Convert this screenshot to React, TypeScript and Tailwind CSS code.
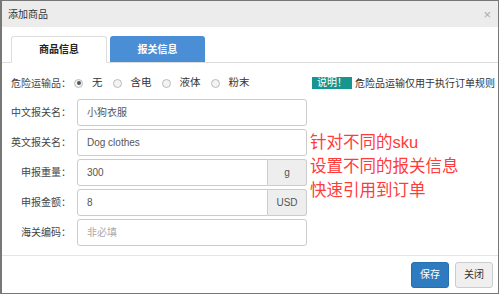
import React from "react";

const font = { fontFamily: '"Liberation Sans", "Noto Sans CJK SC", sans-serif' };

function Radio({ checked, label }: { checked?: boolean; label: string }) {
  return (
    <div className="flex items-center gap-[9px]">
      <span className="w-[9px] h-[9px] rounded-full border border-[#bbb] bg-[#f3f3f3] flex items-center justify-center">
        {checked && <span className="w-[4px] h-[4px] rounded-full bg-[#555]" />}
      </span>
      <span className="text-[10.5px] text-[#333]">{label}</span>
    </div>
  );
}

function Row({ label, children }: { label: string; children: React.ReactNode }) {
  return (
    <div className="flex items-center h-[27px]">
      <div className="w-[60px] text-right text-[10px] text-[#444] whitespace-nowrap">{label}</div>
      <div className="ml-[6px] w-[230px] h-full flex">{children}</div>
    </div>
  );
}

export default function App() {
  return (
    <div className="w-[500px] h-[295px] bg-white" style={font}>
      <div className="w-[499px] h-[294px] border border-[#777] border-l-2 flex flex-col relative">
        <div className="h-[26px] bg-[#ececec] flex items-center justify-between pl-[6px] pr-[7px] shrink-0">
          <span className="text-[10px] text-[#333]">添加商品</span>
          <span className="text-[13px] text-[#aaa] leading-none">×</span>
        </div>
        <div className="mt-[9px] flex pl-[9px] border-b border-[#ddd] h-[27px]">
          <div className="w-[96px] h-[27px] border border-[#ddd] border-b-white rounded-t-[3px] bg-white flex items-center justify-center text-[10px] font-bold text-[#222]">
            商品信息
          </div>
          <div className="ml-[3px] w-[95px] h-[26px] rounded-t-[3px] bg-[#4a8ed6] flex items-center justify-center text-[10px] font-bold text-white">
            报关信息
          </div>
        </div>
        <div className="flex pl-[9px] mt-[9px]">
          <div className="flex flex-col shrink-0">
            <div className="flex items-center h-[22px]">
              <div className="w-[60px] text-[10px] text-[#444] whitespace-nowrap">危险运输品：</div>
              <div className="ml-[3px] flex items-center gap-[10px]">
                <Radio checked label="无" />
                <Radio label="含电" />
                <Radio label="液体" />
                <Radio label="粉末" />
              </div>
            </div>
            <div className="flex flex-col gap-[3px] mt-[5px]">
              <Row label="中文报关名：">
                <div className="flex-1 border border-[#ccc] rounded-[3px] flex items-center px-[9px] text-[10px] text-[#555]">小狗衣服</div>
              </Row>
              <Row label="英文报关名：">
                <div className="flex-1 border border-[#ccc] rounded-[3px] flex items-center px-[9px] text-[10px] text-[#555]">Dog clothes</div>
              </Row>
              <Row label="申报重量：">
                <div className="flex-1 border border-[#ccc] rounded-l-[3px] flex items-center px-[9px] text-[10px] text-[#555]">300</div>
                <div className="w-[39px] border border-l-0 border-[#ccc] rounded-r-[3px] bg-[#eee] flex items-center justify-center text-[10px] text-[#555]">g</div>
              </Row>
              <Row label="申报金额：">
                <div className="flex-1 border border-[#ccc] rounded-l-[3px] flex items-center px-[9px] text-[10px] text-[#555]">8</div>
                <div className="w-[39px] border border-l-0 border-[#ccc] rounded-r-[3px] bg-[#eee] flex items-center justify-center text-[10px] text-[#555]">USD</div>
              </Row>
              <Row label="海关编码：">
                <div className="flex-1 border border-[#ccc] rounded-[3px] flex items-center px-[9px] text-[10px] text-[#aaa]">非必填</div>
              </Row>
            </div>
          </div>
          <div className="flex flex-col ml-[3px] shrink-0">
            <div className="flex items-center h-[22px] text-[10px] ml-[2px] whitespace-nowrap">
              <span className="bg-[#17968f] text-white px-[5px] h-[12px] leading-[12px] mr-[3px] shrink-0">说明！</span>
              <span className="text-[#333]">危险品运输仅用于执行订单规则</span>
            </div>
            <div className="mt-[36px] text-[16.5px] leading-[24px] text-[#ff3b3b] whitespace-nowrap">
              <div>针对不同的sku</div>
              <div>设置不同的报关信息</div>
              <div>快速引用到订单</div>
            </div>
          </div>
        </div>
        <div className="mt-auto border-t border-[#e5e5e5] h-[38px] flex items-center justify-end gap-[6px] pr-[5px]">
          <div className="w-[38px] h-[26px] rounded-[3px] bg-[#2f7bbf] border border-[#2a6fad] flex items-center justify-center text-[10px] text-white">保存</div>
          <div className="w-[38px] h-[26px] rounded-[3px] bg-[#efefef] border border-[#ccc] flex items-center justify-center text-[10px] text-[#333]">关闭</div>
        </div>
      </div>
    </div>
  );
}
